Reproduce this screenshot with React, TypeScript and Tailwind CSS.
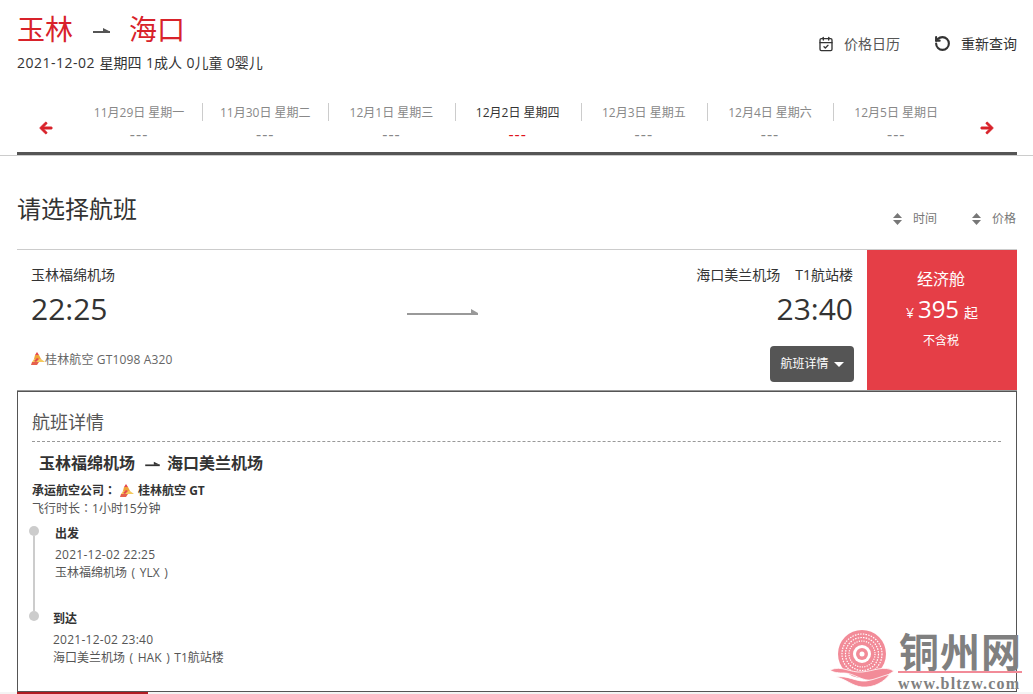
import { CalendarCheck, RotateCcw } from 'lucide-react';
import { FaArrowLeft, FaArrowRight } from 'react-icons/fa';

const days = [
  { label: '11月29日 星期一' },
  { label: '11月30日 星期二' },
  { label: '12月1日 星期三' },
  { label: '12月2日 星期四', active: true },
  { label: '12月3日 星期五' },
  { label: '12月4日 星期六' },
  { label: '12月5日 星期日' },
];

function RouteArrow({ className }: { className: string }) {
  return (
    <svg viewBox="0 0 17 7" className={className} fill="currentColor">
      <path d="M0 4h17v2H0z" />
      <path d="M10 1l7 3.5h-7z" />
    </svg>
  );
}

function AirlineLogo() {
  return (
    <svg viewBox="0 0 14 14" className="size-[14px] shrink-0">
      <path d="M6 0l2 3H4z" fill="#e5484d" />
      <path d="M4 3h4l2 4H3z" fill="#f0a43a" />
      <path d="M3 7h7l4 3H1z" fill="#f4c95d" />
      <path d="M1 10h7l-2 3H0z" fill="#e5604d" />
      <path d="M6 6l2 1-3 3-2-1z" fill="#e5484d" />
    </svg>
  );
}

function SortArrows() {
  return (
    <svg viewBox="0 0 9 12" className="w-[9px] h-3 text-[#777]" fill="currentColor">
      <path d="M4.5 0L9 5H0z" />
      <path d="M0 7h9l-4.5 5z" />
    </svg>
  );
}

function Watermark() {
  return (
    <div className="absolute left-[830px] top-[628px] w-[203px] h-[66px] pointer-events-none">
      <svg viewBox="0 0 64 64" className="absolute left-0 top-0 w-[64px] h-[64px]">
        <circle cx="32" cy="26" r="24" fill="#f28b98" />
        <circle cx="32" cy="26" r="20" fill="none" stroke="#fff" strokeWidth="1.2" strokeDasharray="1.5 1.2" />
        <circle cx="32" cy="26" r="16.5" fill="none" stroke="#fff" strokeWidth="1.2" strokeDasharray="1.5 1.2" />
        <circle cx="32" cy="26" r="13" fill="none" stroke="#fff" strokeWidth="1.2" strokeDasharray="1.2 1.2" />
        <circle cx="32" cy="26" r="9" fill="#fff" />
        <circle cx="32" cy="26" r="6" fill="#f28b98" />
        <circle cx="32" cy="26" r="2.5" fill="#fff" />
        <path d="M0 42c12-5 20 3 32 2s22-7 32-1c-6 4-12 8-20 9-12 2-20-7-30-7-5 0-10 0-14-3z" fill="#f28b98" stroke="#fff" strokeWidth="0.8" />
        <path d="M6 49c12-2 20 5 30 4 8-1 16-5 24-7-6 8-16 14-28 13-10-1-16-8-26-10z" fill="#f28b98" stroke="#fff" strokeWidth="0.8" />
      </svg>
      <div className="absolute left-[69px] top-[2px] font-['Noto_Sans_CJK_SC',sans-serif] font-bold text-[40px] leading-[40px] text-[#808080] tracking-[1px] whitespace-nowrap">
        铜州网
      </div>
      <div className="absolute left-[68px] top-[43px] w-[124px] h-[2px] bg-[#f28b98]" />
      <div className="absolute left-[68px] top-[47px] font-['Liberation_Serif',serif] font-bold text-[16px] leading-[18px] text-[#808080] tracking-[1.2px] whitespace-nowrap">
        www.bltzw.com
      </div>
    </div>
  );
}

export default function App() {
  return (
    <div className="relative w-[1033px] h-[694px] overflow-hidden bg-white font-['Open_Sans','Noto_Sans_CJK_SC',sans-serif] text-[#333]">
      <div className="w-[1000px] ml-[17px]">
        {/* Header */}
        <div className="flex justify-between h-[92px]">
          <div className="pt-[8px]">
            <div className="flex items-center h-[42px] text-[28px] text-[#d8222a]">
              <span>玉林</span>
              <RouteArrow className="w-[17px] h-[7px] ml-[20px] mr-[19px] mt-[3px] text-[#555]" />
              <span>海口</span>
            </div>
            <div className="mt-[3px] text-[14px] leading-[20px] [word-spacing:0.8px]">
              <span className="tracking-[0.5px]">2021-12-02</span> 星期四 1成人 0儿童 0婴儿
            </div>
          </div>
          <div className="flex items-center h-[87px] text-[14px] gap-[34px]">
            <div className="flex items-center gap-[10px] text-[#555]">
              <CalendarCheck className="size-[16px] text-[#333]" strokeWidth={2} />
              <span>价格日历</span>
            </div>
            <div className="flex items-center gap-[10px]">
              <RotateCcw className="size-[17px]" strokeWidth={3} />
              <span>重新查询</span>
            </div>
          </div>
        </div>

        {/* Date strip */}
        <div className="relative flex items-start h-[63px] border-b-[3px] border-[#555] pt-[11px]">
          <FaArrowLeft className="absolute left-[22px] top-[29px] size-[14px] text-[#d8222a]" stroke="currentColor" strokeWidth={30} />
          <FaArrowRight className="absolute right-[23px] top-[29px] size-[14px] text-[#d8222a]" stroke="currentColor" strokeWidth={30} />
          <div className="flex ml-[60px]">
            {days.map((d, i) => (
              <div key={d.label} className="relative w-[126.2px] h-[44px] pr-[2px] text-center">
                <div className={`pt-[1px] text-[12px] leading-[18px] ${d.active ? 'text-[#333]' : 'text-[#888]'}`}>{d.label}</div>
                <div className={`-mt-[1px] text-[16px] leading-[26px] tracking-[1px] ${d.active ? 'text-[#e0141c]' : 'text-[#888]'}`}>---</div>
                {i < 6 && <div className="absolute right-0 top-0 w-px h-[18px] bg-[#ccc]" />}
              </div>
            ))}
          </div>
        </div>
      </div>
      <div className="h-px bg-[#ccc]" />

      <div className="w-[1000px] ml-[17px]">
        {/* Heading and sort */}
        <div className="relative h-[94px] border-b border-[#ccc]">
          <h2 className="pt-[36px] text-[24px] leading-[34px]">请选择航班</h2>
          <div className="absolute right-[1px] top-[54px] flex items-center text-[12px] text-[#777] leading-[18px]">
            <SortArrows />
            <span className="ml-[11px]">时间</span>
            <span className="ml-[35px]"><SortArrows /></span>
            <span className="ml-[11px]">价格</span>
          </div>
        </div>

        {/* Flight card */}
        <div className="flex h-[141px] border-b border-[#999]">
          <div className="flex-1 flex justify-between pl-[14px] pr-[13px] pt-[15px]">
            <div>
              <div className="text-[14px] leading-[20px]">玉林福绵机场</div>
              <div className="text-[30px] leading-[44px] mt-[2px]">22:25</div>
              <div className="flex items-center mt-[20px] text-[12px] leading-[18px] text-[#666] tracking-[0.15px]">
                <span className="mb-[3px]"><AirlineLogo /></span>
                <span>桂林航空 GT1098 A320</span>
              </div>
            </div>
            <svg viewBox="0 0 71 7" className="w-[71px] h-[7px] mt-[44px] ml-[16px] text-[#999]" fill="currentColor">
              <path d="M0 4h71v2H0z" />
              <path d="M64 0l7 4h-7z" />
            </svg>
            <div className="flex flex-col items-end">
              <div className="pr-[1px] text-[14px] leading-[20px]">海口美兰机场<span className="ml-[15px]">T1航站楼</span></div>
              <div className="text-[30px] leading-[44px] mt-[2px] pr-[1px]">23:40</div>
              <div className="flex items-center justify-center gap-[5px] mt-[15px] w-[84px] h-[36px] rounded bg-[#555] text-[12px] text-white">
                <span>航班详情</span>
                <span className="w-0 h-0 border-x-[5px] border-x-transparent border-t-[5px] border-t-white" />
              </div>
            </div>
          </div>
          <div className="w-[150px] h-[140px] bg-[#e53e47] text-white text-center pt-[17px]">
            <div className="pr-[2px] text-[16px] leading-[24px]">经济舱</div>
            <div className="flex items-baseline justify-center mt-[2px] leading-[32px]">
              <span className="text-[14px]">¥</span>
              <span className="text-[24px] ml-[4px] mr-[5px]">395</span>
              <span className="text-[14px]">起</span>
            </div>
            <div className="pr-[2px] text-[12px] leading-[18px] mt-[3px]">不含税</div>
          </div>
        </div>

        {/* Flight detail */}
        <div className="h-[301px] border border-[#555] pl-[14px] pr-[15px]">
          <div className="pt-[17px] h-[50px] border-b border-dashed border-[#999] text-[18px] leading-[26px] text-[#555]">航班详情</div>
          <div className="flex items-center pl-[7px] mt-[9px] text-[16px] leading-[24px] font-bold">
            <span>玉林福绵机场</span>
            <RouteArrow className="w-[15px] h-[6px] ml-[10px] mr-[7px] mt-[1px]" />
            <span>海口美兰机场</span>
          </div>
          <div className="flex items-center mt-[6px] text-[12px] leading-[18px] font-bold">
            <span>承运航空公司<span className="font-['Noto_Sans_CJK_TC']">：</span></span>
            <span className="ml-[4px] mr-[4px]"><AirlineLogo /></span>
            <span>桂林航空 GT</span>
          </div>
          <div className="-mt-[1px] text-[12px] leading-[18px] text-[#555]">飞行时长<span className="font-['Noto_Sans_CJK_TC']">：</span>1小时15分钟</div>

          <div className="flex mt-[6px]">
            <div className="flex flex-col items-center w-[12px] -ml-[4px]">
              <div className="size-[10px] rounded-full bg-[#ccc] mt-[2px]" />
              <div className="w-[2px] h-[75px] bg-[#ccc]" />
              <div className="size-[10px] rounded-full bg-[#ccc]" />
            </div>
            <div className="ml-[15px] mt-[1px] text-[12px] leading-[18px]">
              <div className="font-bold">出发</div>
              <div className="mt-[3px] text-[#555] tracking-[0.25px]">2021-12-02 22:25</div>
              <div className="text-[#555] [word-spacing:1.5px]">玉林福绵机场 ( YLX )</div>
              <div className="mt-[28px] -ml-[2px]">
                <div className="font-bold">到达</div>
                <div className="mt-[3px] text-[#555] tracking-[0.25px]">2021-12-02 23:40</div>
                <div className="text-[#555] [word-spacing:1.5px]">海口美兰机场 ( HAK ) T1航站楼</div>
              </div>
            </div>
          </div>
        </div>
      </div>

      {/* Next flight, cut off by the window */}
      <div className="h-[3px] bg-[#f4f4f4] pl-[17px]">
        <div className="h-[3px] w-[131px] bg-[#b01c22]" />
      </div>

      <Watermark />
    </div>
  );
}
